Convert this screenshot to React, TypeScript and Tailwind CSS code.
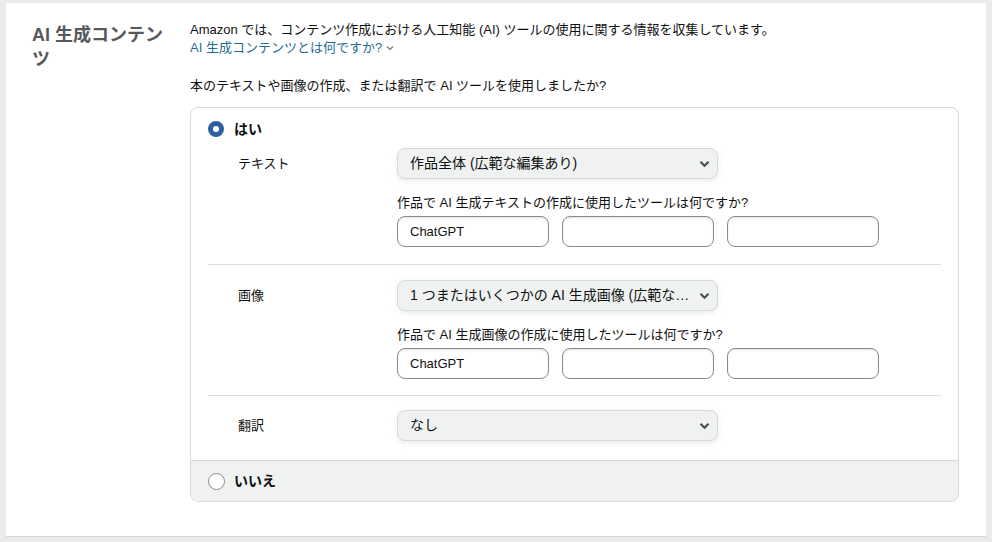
import React from "react";

const font = {
  fontFamily: '"Liberation Sans", Arial, "Noto Sans CJK JP", sans-serif',
};

function Chevron() {
  return (
    <svg width="11" height="8" viewBox="0 0 11 8" className="shrink-0">
      <path d="M1.5 1.8 5.5 5.8 9.5 1.8" fill="none" stroke="#494d4d" strokeWidth="2.2" />
    </svg>
  );
}

function Select({ value }: { value: string }) {
  return (
    <div className="flex h-[31px] w-[321px] items-center justify-between rounded-[8px] border border-[#d5d9d9] bg-[#f0f2f2] pl-[12px] pr-[6px] text-[14px] text-[#0f1111] shadow-[0_2px_5px_0_rgba(213,217,217,0.5)]">
      <span className="truncate">{value}</span>
      <span className="flex w-[14px] justify-center">
        <Chevron />
      </span>
    </div>
  );
}

function ToolInputs({ first }: { first: string }) {
  return (
    <div className="mt-[4px] flex gap-[13px]">
      {[first, "", ""].map((v, i) => (
        <div
          key={i}
          className="flex h-[31px] w-[152px] items-center rounded-[8px] border border-[#888c8c] bg-white px-[12px] text-[13px] text-[#0f1111] shadow-[inset_0_1px_2px_rgba(15,17,17,0.12)]"
        >
          {v}
        </div>
      ))}
    </div>
  );
}

function Row({
  label,
  value,
  question,
  tool,
}: {
  label: string;
  value: string;
  question?: string;
  tool?: string;
}) {
  return (
    <div className="flex">
      <div className="flex h-[31px] w-[189px] shrink-0 items-center pl-[30px] text-[13px] text-[#0f1111]">
        {label}
      </div>
      <div>
        <Select value={value} />
        {question && (
          <>
            <div className="mt-[15px] text-[13px] leading-[18px] text-[#0f1111]">{question}</div>
            <ToolInputs first={tool ?? ""} />
          </>
        )}
      </div>
    </div>
  );
}

export default function App() {
  return (
    <div className="min-h-[542px] bg-[#eaeaea] pl-[6px] pr-[6px] pt-[3px]" style={font}>
      <div className="flex h-[534px] border-b border-[#d6d6d6] bg-white pl-[26px] pt-[18px]">
        <div className="mt-[2px] w-[140px] shrink-0 text-[18px] font-bold leading-[24px] text-[#565959]">
          AI 生成コンテンツ
        </div>
        <div className="ml-[18px] w-[769px]">
          <div className="text-[13px] leading-[18px] text-[#0f1111]">
            Amazon では、コンテンツ作成における人工知能 (AI) ツールの使用に関する情報を収集しています。
          </div>
          <div className="flex items-center gap-[4px] text-[13px] leading-[18px] text-[#1f6e91]">
            <span>AI 生成コンテンツとは何ですか?</span>
            <svg width="8" height="6" viewBox="0 0 8 6">
              <path d="M1 1.5 4 4.5 7 1.5" fill="none" stroke="#6f7373" strokeWidth="1.1" />
            </svg>
          </div>
          <div className="mt-[20px] text-[13px] leading-[18px] text-[#0f1111]">
            本のテキストや画像の作成、または翻訳で AI ツールを使用しましたか?
          </div>

          <div className="mt-[12px] overflow-hidden rounded-[8px] border border-[#d5d9d9]">
            <div className="px-[17px] pt-[11px]">
              <div className="flex h-[20px] items-center gap-[10px]">
                <span className="h-[16px] w-[16px] rounded-full border-[5px] border-[#2e5f9e] bg-white" />
                <span className="text-[14px] font-bold text-[#0f1111]">はい</span>
              </div>

              <div className="border-b border-[#dcdfdf] pb-[17px] pt-[9px]">
                <Row
                  label="テキスト"
                  value="作品全体 (広範な編集あり)"
                  question="作品で AI 生成テキストの作成に使用したツールは何ですか?"
                  tool="ChatGPT"
                />
              </div>

              <div className="border-b border-[#dcdfdf] pb-[16px] pt-[15px]">
                <Row
                  label="画像"
                  value="1 つまたはいくつかの AI 生成画像 (広範な編集あり)"
                  question="作品で AI 生成画像の作成に使用したツールは何ですか?"
                  tool="ChatGPT"
                />
              </div>

              <div className="pb-[19px] pt-[14px]">
                <Row label="翻訳" value="なし" />
              </div>
            </div>

            <div className="flex h-[41px] items-center gap-[9px] border-t border-[#d5d9d9] bg-[#f0f2f2] px-[17px]">
              <span className="h-[17px] w-[17px] rounded-full border border-[#888c8c] bg-white" />
              <span className="text-[14px] font-bold text-[#0f1111]">いいえ</span>
            </div>
          </div>
        </div>
      </div>
    </div>
  );
}
